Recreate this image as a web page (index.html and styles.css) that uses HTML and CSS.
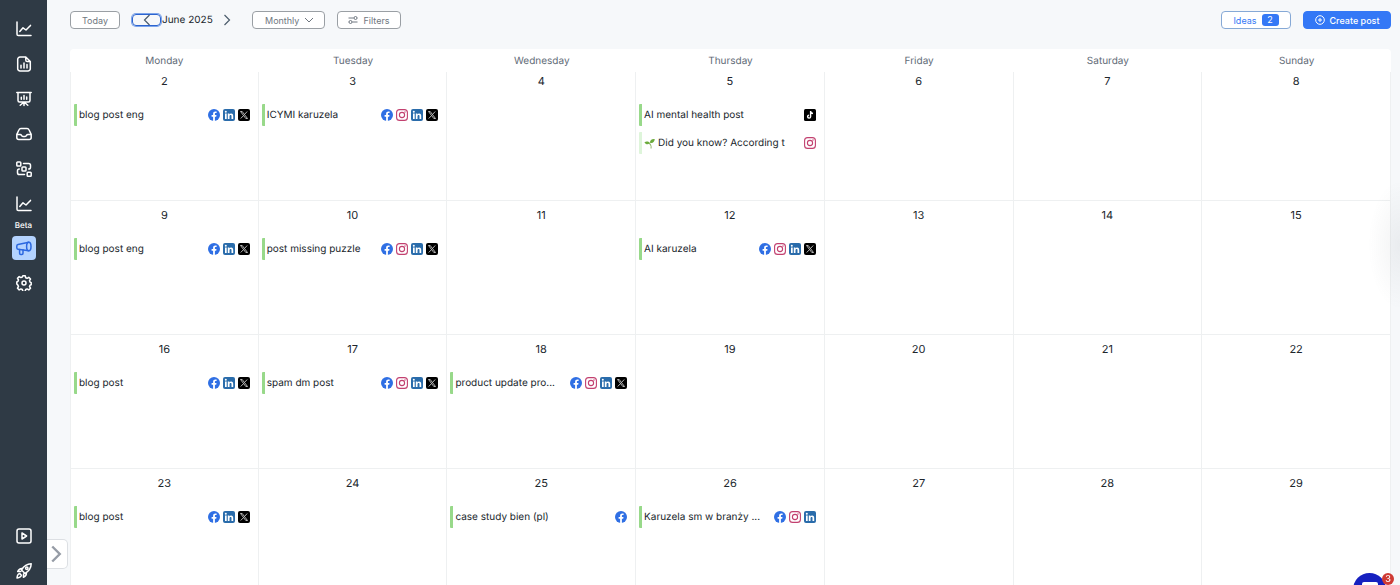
FILE: index.html
```html
<!DOCTYPE html>
<html lang="en">
<head>
  <meta charset="UTF-8" />
  <meta name="viewport" content="width=device-width, initial-scale=1.0"/>
  <title>Content calendar</title>
  <link rel="stylesheet" href="styles.css">
</head>
<body>
  <!-- Icon set -->
  <svg class="icon-defs" aria-hidden="true">
    <symbol id="i-chart" viewBox="0 0 16 16"><path d="M1 1v12.2c0 .8.6 1.3 1.3 1.3H15M3.8 10.5 7 6.8l3 2.2 4.5-4.6"/></symbol>
    <symbol id="i-report" viewBox="0 0 16 16"><path d="M9.8 1H4a2.3 2.3 0 0 0-2.3 2.3v9.4A2.3 2.3 0 0 0 4 15h8a2.3 2.3 0 0 0 2.3-2.3V5.5zM9.8 1v3.2c0 .8.5 1.3 1.3 1.3h3.2M5 12V9.2M8 12V7M11 12V8.6"/></symbol>
    <symbol id="i-board" viewBox="0 0 16 16"><path d="M.8 1.5h14.4M2 1.5v8c0 .9.6 1.5 1.5 1.5h9c.9 0 1.5-.6 1.5-1.5v-8M5.3 8.3v-2M8 8.3V4.6M10.7 8.3V6M8 11v3.5M8 11l-3.8 3.3M8 11l3.8 3.3"/></symbol>
    <symbol id="i-inbox" viewBox="0 0 16 16"><path d="M.8 8.4 3 3.8c.4-.9 1-1.3 1.9-1.3h6.2c.9 0 1.5.4 1.9 1.3l2.2 4.6v3.1c0 1.2-.8 2-2 2H2.8c-1.2 0-2-.8-2-2zM.8 8.4h3.4c.8 0 1 .4 1.3 1 .3.7.6 1 1.4 1h2.2c.8 0 1.1-.3 1.4-1 .3-.6.5-1 1.3-1h3.4"/></symbol>
    <symbol id="i-flow" viewBox="0 0 16 16"><rect x=".8" y="1" width="4" height="4" rx=".8"/><rect x="6" y="6" width="4" height="4" rx=".8"/><rect x="11.2" y="11.2" width="4" height="4" rx=".8"/><path d="M7.5 2.5h5.200c1 0 1.800.8 1.800 1.800v1.900c0 1-.8 1.800-1.800 1.800M3.300 8c-1 0-1.800.8-1.800 1.800v1.900c0 1 .8 1.800 1.800 1.800h5.200"/></symbol>
    <symbol id="i-mega" viewBox="0 0 16 16"><path d="M12.8 2.3 2 4.500C1.200 4.700.8 5.200.8 6v1.800c0 .8.4 1.300 1.200 1.400l10.800 1.500"/><ellipse cx="12.800" cy="6.500" rx="2.200" ry="4.300"/><path d="M3.600 9.500v3.800c0 .7.4 1.100 1.100 1.100h1.200c.7 0 1.100-.4 1.100-1.100V9.800"/></symbol>
    <symbol id="i-gear" viewBox="0 0 16 16"><path d="M6.800.8h2.400l.5 1.900 1.400.6 1.700-1 1.700 1.700-1 1.700.6 1.400 1.100.6v2l-1.100.4-.6 1.400 1 1.700-1.700 1.700-1.700-1-1.400.6-.5 1.900H6.800l-.5-1.900-1.400-.6-1.700 1-1.700-1.700 1-1.700-.6-1.400L.8 9V7l1.100-.6.6-1.400-1-1.700 1.700-1.700 1.700 1 1.400-.6z"/><circle cx="8" cy="8" r="2"/></symbol>
    <symbol id="i-play" viewBox="0 0 16 16"><rect x="1" y="1" width="14" height="14" rx="2"/><path d="M6 5v6l4.6-3z"/></symbol>
    <symbol id="i-rocket" viewBox="0 0 16 16"><path d="M15.2.8c-4.6.1-7.3 2.2-9.7 6.2l3.5 3.5c4-2.400 6.100-5.100 6.200-9.700zM6.500 5.600c-2.200-.3-3.800.7-4.800 3l3.200-.2M10.400 9.500c.3 2.200-.7 3.800-3 4.800l.2-3.200M3.800 10.600c-1.700.3-2.500 1.700-2.800 4.400 2.700-.3 4.100-1.100 4.400-2.800z"/><circle cx="10.800" cy="5.200" r="1.200"/></symbol>
    <symbol id="i-left" viewBox="0 0 8 12"><path d="M6.5 1 1.5 6l5 5"/></symbol>
    <symbol id="i-right" viewBox="0 0 8 12"><path d="m1.5 1 5 5-5 5"/></symbol>
    <symbol id="i-down" viewBox="0 0 10 6"><path d="m1 1 4 4 4-4"/></symbol>
    <symbol id="i-filters" viewBox="0 0 10 8"><path d="M.5 2h5.3M9.2 2h.3M.5 6h.3M4.2 6h5.300"/><circle cx="7.500" cy="2" r="1.500"/><circle cx="2.500" cy="6" r="1.500"/></symbol>
    <symbol id="i-plus" viewBox="0 0 10 10"><circle cx="5" cy="5" r="4.3"/><path d="M5 3v4M3 5h4"/></symbol>
    <symbol id="i-fb" viewBox="0 0 12 12"><circle cx="6" cy="6" r="6" fill="#2f6fe4"/><path fill="#fff" d="M5.1 12V7.800H3.600V6h1.500V4.800c0-1.600.9-2.400 2.300-2.400.5 0 .9 0 1.200.1v1.600h-.8c-.7 0-.9.4-.9.900v1h1.600l-.3 1.800H6.900V12z"/></symbol>
    <symbol id="i-ig" viewBox="0 0 12 12"><g fill="none" stroke="#c2406f" stroke-width="1.1"><rect x=".6" y=".6" width="10.8" height="10.8" rx="3"/><circle cx="6" cy="6" r="2.6"/></g><circle cx="9" cy="3" r=".7" fill="#c2406f"/></symbol>
    <symbol id="i-in" viewBox="0 0 12 12"><rect width="12" height="12" rx="2" fill="#2a6cab"/><g fill="#fff"><circle cx="2.8" cy="2.8" r="1"/><path d="M2 4.600h1.700v5.500H2zM4.800 4.600h1.600v.8c.3-.5.900-.9 1.700-.9 1.600 0 2.100 1 2.100 2.500v3.100H8.500V7.300c0-.8-.2-1.300-.9-1.300-.8 0-1.100.6-1.100 1.300v2.800H4.800z"/></g></symbol>
    <symbol id="i-x" viewBox="0 0 12 12"><rect width="12" height="12" rx="2"/><path fill="none" stroke="#ddd" stroke-width=".8" d="M2.500 2.500h1.700l5.300 7H7.800zM9.200 2.500 6.600 5.400M5.400 6.700 2.700 9.500"/></symbol>
    <symbol id="i-tt" viewBox="0 0 12 12"><rect width="12" height="12" rx="1.5"/><path fill="none" stroke="#fff" stroke-width="1.4" d="M6.600 2v5.700a1.500 1.500 0 1 1-1.500-1.600M6.600 2.300c.2 1.300 1 2 2.400 2.200"/></symbol>
    <symbol id="i-sprout" viewBox="0 0 12 12"><path fill="none" stroke="#8fb56a" stroke-width="1.1" d="M7.700 11.500c.4-3-.2-4.500-2.200-6.200"/><path fill="#6bab3c" d="M.5 4.600c1.900-1.300 4.500-1 5.800.8C4.400 7.600 2 7.200.5 4.600zM6.600 5.300C6.200 2.700 8.600.8 11.700 1.200c0 3-2.100 4.900-5.100 4.100z"/></symbol>
  </svg>

  <div class="app">
    <!-- Sidebar -->
    <aside class="sidebar">
      <nav class="side-nav" aria-label="Main">
        <a href="#" class="side-link" aria-label="Analytics"><svg class="side-icon"><use href="#i-chart"/></svg></a>
        <a href="#" class="side-link" aria-label="Reports"><svg class="side-icon"><use href="#i-report"/></svg></a>
        <a href="#" class="side-link" aria-label="Dashboards"><svg class="side-icon"><use href="#i-board"/></svg></a>
        <a href="#" class="side-link" aria-label="Inbox"><svg class="side-icon"><use href="#i-inbox"/></svg></a>
        <a href="#" class="side-link" aria-label="Automation"><svg class="side-icon"><use href="#i-flow"/></svg></a>
        <a href="#" class="side-link side-link-beta"><svg class="side-icon"><use href="#i-chart"/></svg><span class="beta">Beta</span></a>
        <a href="#" class="side-link" aria-label="Publishing"><span class="active-box"><svg class="side-icon"><use href="#i-mega"/></svg></span></a>
        <a href="#" class="side-link" aria-label="Settings"><svg class="side-icon"><use href="#i-gear"/></svg></a>
      </nav>
      <nav class="side-nav side-bottom" aria-label="Help">
        <a href="#" class="side-link" aria-label="Tutorials"><svg class="side-icon"><use href="#i-play"/></svg></a>
        <a href="#" class="side-link" aria-label="Get started"><svg class="side-icon"><use href="#i-rocket"/></svg></a>
      </nav>
      <button class="expand" aria-label="Expand menu"><svg><use href="#i-right"/></svg></button>
    </aside>

    <main class="main">
      <!-- Toolbar -->
      <header class="toolbar">
        <button class="btn btn-today">Today</button>
        <div class="month-nav">
          <button class="prev" aria-label="Previous month"><svg class="chevron"><use href="#i-left"/></svg></button>
          <span class="month">June 2025</span>
          <button class="next" aria-label="Next month"><svg class="chevron"><use href="#i-right"/></svg></button>
        </div>
        <div class="view">
          <select class="btn view-select" aria-label="Calendar view">
            <option>Monthly</option>
            <option>Weekly</option>
          </select>
          <svg class="view-arrow"><use href="#i-down"/></svg>
        </div>
        <button class="btn btn-filters"><svg class="filter-icon"><use href="#i-filters"/></svg>Filters</button>
        <button class="btn btn-ideas">Ideas <span class="count">2</span></button>
        <button class="btn btn-create"><svg class="plus-icon"><use href="#i-plus"/></svg>Create post</button>
      </header>

      <!-- Calendar -->
      <table class="calendar">
        <thead>
          <tr>
            <th>Monday</th>
            <th>Tuesday</th>
            <th>Wednesday</th>
            <th>Thursday</th>
            <th>Friday</th>
            <th>Saturday</th>
            <th>Sunday</th>
          </tr>
        </thead>
        <tbody>
          <tr class="first-week">
            <td><div class="date">2</div>
              <a href="#" class="post"><span class="post-title">blog post eng</span><span class="channels"><svg><use href="#i-fb"/></svg><svg><use href="#i-in"/></svg><svg><use href="#i-x"/></svg></span></a>
            </td>
            <td><div class="date">3</div>
              <a href="#" class="post"><span class="post-title">ICYMI karuzela</span><span class="channels"><svg><use href="#i-fb"/></svg><svg><use href="#i-ig"/></svg><svg><use href="#i-in"/></svg><svg><use href="#i-x"/></svg></span></a>
            </td>
            <td><div class="date">4</div></td>
            <td><div class="date">5</div>
              <a href="#" class="post"><span class="post-title">AI mental health post</span><span class="channels"><svg><use href="#i-tt"/></svg></span></a>
              <a href="#" class="post post-light"><span class="post-title"><svg class="sprout"><use href="#i-sprout"/></svg>Did you know? According t</span><span class="channels"><svg><use href="#i-ig"/></svg></span></a>
            </td>
            <td><div class="date">6</div></td>
            <td><div class="date">7</div></td>
            <td><div class="date">8</div></td>
          </tr>
          <tr>
            <td><div class="date">9</div>
              <a href="#" class="post"><span class="post-title">blog post eng</span><span class="channels"><svg><use href="#i-fb"/></svg><svg><use href="#i-in"/></svg><svg><use href="#i-x"/></svg></span></a>
            </td>
            <td><div class="date">10</div>
              <a href="#" class="post"><span class="post-title">post missing puzzle</span><span class="channels"><svg><use href="#i-fb"/></svg><svg><use href="#i-ig"/></svg><svg><use href="#i-in"/></svg><svg><use href="#i-x"/></svg></span></a>
            </td>
            <td><div class="date">11</div></td>
            <td><div class="date">12</div>
              <a href="#" class="post"><span class="post-title">AI karuzela</span><span class="channels"><svg><use href="#i-fb"/></svg><svg><use href="#i-ig"/></svg><svg><use href="#i-in"/></svg><svg><use href="#i-x"/></svg></span></a>
            </td>
            <td><div class="date">13</div></td>
            <td><div class="date">14</div></td>
            <td><div class="date">15</div></td>
          </tr>
          <tr>
            <td><div class="date">16</div>
              <a href="#" class="post"><span class="post-title">blog post</span><span class="channels"><svg><use href="#i-fb"/></svg><svg><use href="#i-in"/></svg><svg><use href="#i-x"/></svg></span></a>
            </td>
            <td><div class="date">17</div>
              <a href="#" class="post"><span class="post-title">spam dm post</span><span class="channels"><svg><use href="#i-fb"/></svg><svg><use href="#i-ig"/></svg><svg><use href="#i-in"/></svg><svg><use href="#i-x"/></svg></span></a>
            </td>
            <td><div class="date">18</div>
              <a href="#" class="post"><span class="post-title">product update pro...</span><span class="channels"><svg><use href="#i-fb"/></svg><svg><use href="#i-ig"/></svg><svg><use href="#i-in"/></svg><svg><use href="#i-x"/></svg></span></a>
            </td>
            <td><div class="date">19</div></td>
            <td><div class="date">20</div></td>
            <td><div class="date">21</div></td>
            <td><div class="date">22</div></td>
          </tr>
          <tr>
            <td><div class="date">23</div>
              <a href="#" class="post"><span class="post-title">blog post</span><span class="channels"><svg><use href="#i-fb"/></svg><svg><use href="#i-in"/></svg><svg><use href="#i-x"/></svg></span></a>
            </td>
            <td><div class="date">24</div></td>
            <td><div class="date">25</div>
              <a href="#" class="post"><span class="post-title">case study bien (pl)</span><span class="channels"><svg><use href="#i-fb"/></svg></span></a>
            </td>
            <td><div class="date">26</div>
              <a href="#" class="post"><span class="post-title">Karuzela sm w branży ...</span><span class="channels"><svg><use href="#i-fb"/></svg><svg><use href="#i-ig"/></svg><svg><use href="#i-in"/></svg></span></a>
            </td>
            <td><div class="date">27</div></td>
            <td><div class="date">28</div></td>
            <td><div class="date">29</div></td>
          </tr>
        </tbody>
      </table>
    </main>
  </div>

  <div class="edge-shadow"></div>

  <!-- Chat launcher -->
  <button class="chat" aria-label="Open chat">
    <svg class="chat-icon" viewBox="0 0 16 16"><rect width="16" height="14" rx="2" fill="#fff"/></svg>
    <span class="chat-badge">3</span>
  </button>
</body>
</html>
```

FILE: styles.css
```css
:root {
  --dark: #2f3a45;
  --page: #f6f8fa;
  --line: #eef0f1;
  --blue: #3478f6;
  --grey: #6f7780;
  --text: #20262c;
}

* {
  box-sizing: border-box;
}

body {
  margin: 0;
  font-family: Inter, "Liberation Sans", sans-serif;
  font-size: 10px;
  color: var(--text);
  background: var(--page);
  overflow: hidden;
  text-rendering: geometricPrecision;
}

button, select {
  font-family: inherit;
  margin: 0;
  padding: 0;
  cursor: pointer;
}

svg {
  display: block;
  flex: none;
}

.icon-defs {
  position: absolute;
  width: 0;
  height: 0;
}

.app {
  display: flex;
  height: 100vh;
}

/* Sidebar */
.sidebar {
  position: relative;
  flex: none;
  width: 47px;
  display: flex;
  flex-direction: column;
  justify-content: space-between;
  padding-top: 11px;
  background: var(--dark);
}

.side-nav {
  display: flex;
  flex-direction: column;
}

.side-bottom {
  margin-bottom: -3px;
}

.side-link {
  display: flex;
  flex-direction: column;
  align-items: center;
  justify-content: center;
  height: 35px;
  color: #fff;
  text-decoration: none;
}

.side-link-beta {
  justify-content: flex-start;
  height: 44px;
  padding-top: 10px;
  gap: 8px;
}

.beta {
  font-size: 8px;
  font-weight: 500;
  line-height: 10px;
}

.side-icon {
  width: 16px;
  height: 16px;
  fill: none;
  stroke: currentColor;
  stroke-width: 1.5;
  stroke-linecap: round;
  stroke-linejoin: round;
}

.active-box {
  display: flex;
  align-items: center;
  justify-content: center;
  width: 24px;
  height: 24px;
  border-radius: 4px;
  background: #b4d3ff;
  color: #2c68e0;
}

.expand {
  position: absolute;
  left: 100%;
  bottom: 16px;
  display: flex;
  align-items: center;
  justify-content: center;
  width: 21px;
  height: 30px;
  padding-right: 3px;
  border: 1px solid #dcdfe3;
  border-left: none;
  border-radius: 0 5px 5px 0;
  background: #fff;
}

.expand svg {
  width: 12px;
  height: 18px;
  fill: none;
  stroke: #969ca6;
  stroke-width: 1.6;
}

/* Toolbar */
.main {
  flex: 1;
  min-width: 0;
  padding: 11px 9px 0 23px;
}

.toolbar {
  display: flex;
  align-items: center;
  gap: 12px;
  height: 18px;
  margin-bottom: 20px;
}

.btn {
  display: flex;
  align-items: center;
  justify-content: center;
  height: 18px;
  border: 1px solid #9a9fa4;
  border-radius: 4px;
  background: #fff;
  color: var(--grey);
  font-size: 9px;
}

.btn-today {
  width: 50px;
}

.month-nav {
  display: flex;
  align-items: center;
  width: 108px;
}

.prev {
  display: flex;
  flex: none;
  align-items: center;
  justify-content: center;
  width: 29px;
  height: 12px;
  border: 1px solid #2c64cf;
  border-radius: 4px;
  background: none;
  box-shadow: 0 0 0 1px #7da5ea;
}

.month {
  flex: 1;
  padding-left: 1px;
  white-space: nowrap;
}

.next {
  display: flex;
  justify-content: center;
  width: 27px;
  border: none;
  background: none;
}

.chevron {
  width: 8px;
  height: 12px;
  fill: none;
  stroke: #4b5c6b;
  stroke-width: 1.2;
}

.view {
  position: relative;
}

.view-select {
  appearance: none;
  width: 73px;
  padding: 0 20px 0 12px;
}

.view-arrow {
  position: absolute;
  top: 6px;
  right: 11px;
  width: 10px;
  height: 6px;
  fill: none;
  stroke: var(--grey);
  pointer-events: none;
}

.btn-filters {
  width: 64px;
  gap: 5px;
}

.filter-icon {
  width: 10px;
  height: 8px;
  fill: none;
  stroke: var(--grey);
  stroke-width: 1;
}

.btn-ideas {
  width: 70px;
  gap: 5px;
  margin-left: auto;
  border-color: #86a9d6;
  color: var(--blue);
}

.count {
  width: 17px;
  border-radius: 3px;
  background: var(--blue);
  color: #fff;
  line-height: 12px;
  text-align: center;
}

.btn-create {
  width: 88px;
  gap: 5px;
  border-color: var(--blue);
  background: var(--blue);
  color: #fff;
  font-weight: 500;
}

.plus-icon {
  width: 10px;
  height: 10px;
  fill: none;
  stroke: #fff;
  stroke-width: 1;
}

/* Calendar */
.calendar {
  width: 100%;
  table-layout: fixed;
  border-spacing: 0;
  border-radius: 4px 4px 0 0;
  background: #fff;
}

.calendar th {
  height: 23px;
  padding: 0;
  color: #5f6b77;
  font-weight: 400;
}

.calendar td {
  height: 134px;
  padding: 6px 8px 0 3px;
  border-right: 1px solid var(--line);
  border-bottom: 1px solid var(--line);
  vertical-align: top;
}

.calendar td:first-child {
  border-left: 1px solid var(--line);
}

.calendar .first-week td {
  height: 129px;
  padding-top: 1px;
}

.date {
  margin: 0 -5px 15px 0;
  font-size: 11px;
  line-height: 16px;
  text-align: center;
}

.post {
  display: flex;
  align-items: center;
  justify-content: space-between;
  height: 22px;
  margin-bottom: 6px;
  padding-left: 2px;
  border-left: 3px solid #98d98a;
  border-radius: 1px;
  color: inherit;
  text-decoration: none;
}

.post-light {
  border-left-color: #def5da;
}

.post-title {
  display: flex;
  align-items: center;
  gap: 3px;
  white-space: nowrap;
}

.sprout {
  width: 11px;
  height: 11px;
}

.channels {
  display: flex;
  gap: 3px;
}

.channels svg {
  width: 12px;
  height: 12px;
}

/* Overlays */
.edge-shadow {
  position: fixed;
  top: 180px;
  right: 0;
  width: 32px;
  height: 130px;
  background: radial-gradient(ellipse at right, rgba(40, 50, 60, 0.06), transparent 70%);
  pointer-events: none;
}

.chat {
  position: fixed;
  right: 14px;
  bottom: -21px;
  display: flex;
  justify-content: center;
  width: 33px;
  height: 33px;
  padding-top: 9px;
  border: none;
  border-radius: 50%;
  background: #1620c0;
}

.chat-icon {
  width: 16px;
  height: 16px;
}

.chat-badge {
  position: absolute;
  top: 0;
  right: -8px;
  width: 12px;
  border-radius: 50%;
  background: #cf3a34;
  color: #fff;
  font-size: 9px;
  font-weight: 500;
  line-height: 12px;
  text-align: center;
}
```
